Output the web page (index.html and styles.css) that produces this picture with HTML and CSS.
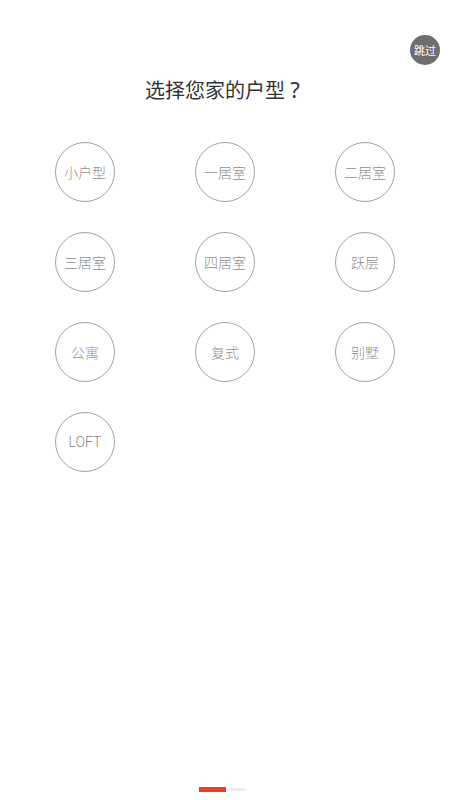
FILE: index.html
```html
<!DOCTYPE html>
<html lang="zh-CN">
<head>
<meta charset="utf-8">
<title>选择您家的户型</title>
<link rel="stylesheet" href="styles.css">
</head>
<body>
<div class="page">
  <button class="skip">跳过</button>
  <h1 class="title">选择您家的户型<span class="qmark">?</span></h1>
  <div class="grid">
    <div class="cell"><span class="opt">小户型</span></div>
    <div class="cell"><span class="opt">一居室</span></div>
    <div class="cell"><span class="opt">二居室</span></div>
    <div class="cell"><span class="opt">三居室</span></div>
    <div class="cell"><span class="opt">四居室</span></div>
    <div class="cell"><span class="opt">跃层</span></div>
    <div class="cell"><span class="opt">公寓</span></div>
    <div class="cell"><span class="opt">复式</span></div>
    <div class="cell"><span class="opt">别墅</span></div>
    <div class="cell"><span class="opt latin">LOFT</span></div>
  </div>
  <div class="dots">
    <span class="dot active"></span>
    <span class="dot"></span>
  </div>
</div>
</body>
</html>
```

FILE: styles.css
```css
* { box-sizing: border-box; }
html, body {
  margin: 0;
  padding: 0;
  background: #ffffff;
}
body {
  font-family: "Noto Sans CJK SC", "Noto Sans", sans-serif;
}
.page {
  position: relative;
  width: 450px;
  height: 800px;
  display: flex;
  flex-direction: column;
  padding-top: 75px;
}
.skip {
  position: absolute;
  top: 35px;
  left: 410px;
  width: 30px;
  height: 30px;
  border-radius: 50%;
  border: none;
  padding: 0;
  background: #6e6e6e;
  color: #ffffff;
  font-family: "Noto Sans CJK SC", sans-serif;
  font-size: 11px;
  line-height: 30px;
  text-align: center;
}
.title {
  margin: 0;
  height: 28px;
  font-size: 20px;
  line-height: 28px;
  font-weight: 400;
  color: #333333;
  text-align: center;
}
.qmark {
  display: inline-block;
  width: 20px;
  text-align: center;
  font-family: "Noto Sans", "DejaVu Sans", sans-serif;
  font-size: 22px;
  line-height: 28px;
}
.grid {
  margin-top: 39px;
  padding-left: 15px;
  display: grid;
  grid-template-columns: repeat(3, 140px);
  row-gap: 30px;
}
.cell {
  display: flex;
  justify-content: center;
}
.opt {
  width: 60px;
  height: 60px;
  border-radius: 50%;
  border: 1px solid #a2a2a2;
  display: flex;
  align-items: center;
  justify-content: center;
  font-size: 14px;
  font-weight: 300;
  color: #909090;
}
.opt.latin {
  font-family: "Roboto", "Noto Sans", sans-serif;
  font-size: 14px;
  font-weight: 300;
  color: #888888;
}
.dots {
  margin-top: auto;
  margin-bottom: 8px;
  display: flex;
  align-items: center;
  justify-content: center;
  gap: 4px;
  padding-right: 6px;
}
.dot {
  width: 15px;
  height: 3px;
  background: #ececec;
}
.dot.active {
  width: 27px;
  height: 5px;
  background: #f23a2a;
}
```
